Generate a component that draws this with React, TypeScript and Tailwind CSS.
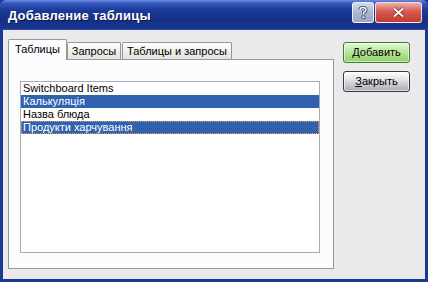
import React from 'react';

const items = [
  { label: 'Switchboard Items', selected: false, focus: false },
  { label: 'Калькуляція', selected: true, focus: false },
  { label: 'Назва блюда', selected: false, focus: false },
  { label: 'Продукти харчування', selected: true, focus: true },
];

function TitleButtons() {
  return (
    <div className="flex items-start gap-px pt-[2px]">
      <div className="flex h-[21px] w-[22px] items-center justify-center rounded-[3px] border border-white/80 bg-[linear-gradient(180deg,#d4dcea_0%,#a9b8d2_50%,#98a8c6_100%)]">
        <svg width="10" height="13" viewBox="0 0 10 13">
          <path
            d="M2 4 Q2 1.5 5 1.5 Q8 1.5 8 4 Q8 5.5 5.5 6.5 L5.5 8.5"
            fill="none"
            stroke="#3a4560"
            strokeWidth="3"
          />
          <path
            d="M2 4 Q2 1.5 5 1.5 Q8 1.5 8 4 Q8 5.5 5.5 6.5 L5.5 8.5"
            fill="none"
            stroke="#ffffff"
            strokeWidth="1.4"
          />
          <rect x="4" y="10" width="3" height="2.5" fill="#ffffff" stroke="#3a4560" strokeWidth="0.8" />
        </svg>
      </div>
      <div className="flex h-[21px] w-[47px] items-center justify-center rounded-[3px] border border-white/80 bg-[linear-gradient(180deg,#eeb0a8_0%,#d65a50_45%,#c23a32_100%)]">
        <svg width="13" height="11" viewBox="0 0 13 11">
          <path d="M2 1.5 L11 9.5 M11 1.5 L2 9.5" stroke="#7a2018" strokeWidth="3.4" />
          <path d="M2 1.5 L11 9.5 M11 1.5 L2 9.5" stroke="#ffffff" strokeWidth="2" />
        </svg>
      </div>
    </div>
  );
}

export default function App() {
  return (
    <div
      className="flex h-[282px] w-[428px] flex-col overflow-hidden bg-[#1a3a92] text-[11px] text-black"
      style={{ fontFamily: '"Liberation Sans", Arial, sans-serif' }}
    >
      {/* title bar */}
      <div className="flex h-[29px] shrink-0 items-start justify-between rounded-t-[6px] bg-[linear-gradient(180deg,#6a8be0_0%,#3457bd_12%,#1c3a9a_35%,#142f86_70%,#1a3890_100%)] pl-[8px] pr-[6px]">
        <span className="pt-[6px] text-[13px] font-bold tracking-[0.2px] text-white [text-shadow:1px_1px_0_#0b1a50]">
          Добавление таблицы
        </span>
        <TitleButtons />
      </div>

      {/* client area */}
      <div className="mx-[3px] mb-[3px] flex flex-1 border-t border-[#2a4aa6] bg-[#ECE9EC]">
        <div className="ml-[5px] mt-[9px] flex w-[326px] flex-col">
          {/* tabs */}
          <div className="relative z-10 flex h-[20px] items-end">
            <div className="-mb-px flex h-[21px] w-[59px] items-center justify-center rounded-t-[2px] border border-b-0 border-[#919B9C] bg-[#FCFCFE] pb-[2px]">
              Таблицы
            </div>
            <div className="flex h-[17px] w-[54px] items-center justify-center rounded-t-[2px] border border-b-0 border-[#919B9C] bg-[linear-gradient(180deg,#ffffff_0%,#f3f3ef_40%,#e3e2dc_100%)]">
              Запросы
            </div>
            <div className="ml-px flex h-[17px] w-[110px] items-center justify-center rounded-t-[2px] border border-b-0 border-[#919B9C] bg-[linear-gradient(180deg,#ffffff_0%,#f3f3ef_40%,#e3e2dc_100%)]">
              Таблицы и запросы
            </div>
          </div>

          {/* panel */}
          <div className="h-[210px] border border-[#919B9C] bg-[#FCFCFE] pl-[11px] pt-[21px]">
            <div className="h-[172px] w-[300px] border border-[#A5ACB5] bg-white">
              {items.map((item) => (
                <div
                  key={item.label}
                  className={
                    item.selected
                      ? item.focus
                        ? 'flex h-[13px] items-center border border-dotted border-[#e8a33c] bg-[#3162B0] pl-[1px] leading-none text-white'
                        : 'flex h-[13px] items-center bg-[#3162B0] pl-[2px] leading-none text-white'
                      : 'flex h-[13px] items-center pl-[2px] leading-none'
                  }
                >
                  {item.label}
                </div>
              ))}
            </div>
          </div>
        </div>

        {/* buttons */}
        <div className="ml-[9px] mt-[12px] flex flex-col gap-[8px]">
          <div className="flex h-[21px] w-[67px] items-center justify-center rounded-[3px] border border-[#3f7a2e] bg-[linear-gradient(180deg,#e4f8d4_0%,#b8e89a_45%,#8fd06a_100%)] shadow-[inset_0_0_0_1px_rgba(255,255,255,0.6)]">
            <span>
              <span className="underline">Д</span>обавить
            </span>
          </div>
          <div className="flex h-[21px] w-[67px] items-center justify-center rounded-[3px] border border-[#3a3a40] bg-[linear-gradient(180deg,#ffffff_0%,#e2e2e6_40%,#a9a9b2_100%)] shadow-[inset_0_0_0_1px_rgba(255,255,255,0.6)]">
            <span>
              <span className="underline">З</span>акрыть
            </span>
          </div>
        </div>
      </div>
    </div>
  );
}
